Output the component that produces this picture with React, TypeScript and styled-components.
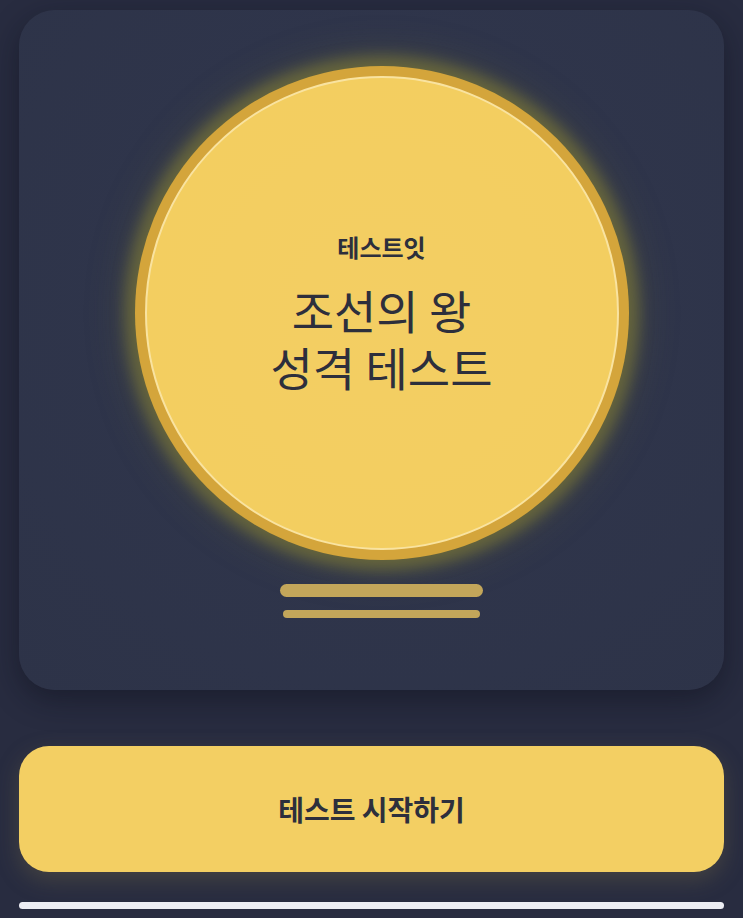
import React from 'react';
import styled, { createGlobalStyle } from 'styled-components';

const GlobalStyle = createGlobalStyle`
  html, body {
    margin: 0;
    padding: 0;
    background: #282c40;
  }
  body {
    font-family: 'Noto Sans CJK KR', 'Noto Sans', sans-serif;
  }
`;

const Page = styled.div`
  width: 743px;
  height: 918px;
  box-sizing: border-box;
  padding: 10px 19px 0;
  display: flex;
  flex-direction: column;
  background: #282c40;
  overflow: hidden;
`;

const Card = styled.div`
  height: 680px;
  border-radius: 36px;
  background: radial-gradient(circle at 52% 42%, #343a52 0%, #2f354b 45%, #2d3348 100%);
  box-shadow: 0 10px 30px rgba(12, 14, 24, 0.45);
  display: flex;
  flex-direction: column;
  align-items: center;
  padding: 56px 0 0 20px;
  box-sizing: border-box;
`;

const Coin = styled.div`
  width: 494px;
  height: 494px;
  border-radius: 50%;
  box-sizing: border-box;
  background: #d4a53b;
  padding: 10px;
  box-shadow: 0 0 14px 10px rgba(115, 112, 58, 0.75), 0 0 34px 16px rgba(100, 100, 60, 0.3);
`;

const CoinFace = styled.div`
  width: 100%;
  height: 100%;
  border-radius: 50%;
  box-sizing: border-box;
  border: 2px solid #f9e3a0;
  background: radial-gradient(circle at 50% 50%, #f3ce63 0%, #f3ce60 72%, #f6d453 100%);
  display: flex;
  flex-direction: column;
  align-items: center;
  justify-content: center;
  color: #2d2f3c;
`;

const Brand = styled.div`
  font-size: 24px;
  font-weight: 700;
  line-height: 28px;
  margin-bottom: 22px;
`;

const Title = styled.h1`
  margin: 0;
  display: flex;
  flex-direction: column;
  align-items: center;
  gap: 4px;
  font-size: 46px;
  font-weight: 400;
  text-align: center;
`;

const TitleLine = styled.span`
  display: block;
  height: 53px;
  line-height: 53px;
`;

const Bars = styled.div`
  margin-top: 24px;
  display: flex;
  flex-direction: column;
  align-items: center;
  gap: 13px;
`;

const Bar = styled.div<{ $w: number; $h: number }>`
  width: ${(p) => p.$w}px;
  height: ${(p) => p.$h}px;
  border-radius: ${(p) => p.$h}px;
  background: #c3a65a;
`;

const StartButton = styled.button`
  margin-top: 56px;
  height: 126px;
  border: none;
  border-radius: 30px;
  background: #f3cf63;
  color: #2d2f3c;
  font-family: 'Noto Sans CJK KR', 'Noto Sans', sans-serif;
  font-size: 28px;
  font-weight: 700;
  box-shadow: 0 8px 22px rgba(120, 110, 70, 0.35);
  cursor: pointer;
`;

const HomeIndicator = styled.div`
  margin-top: 30px;
  height: 7px;
  border-radius: 4px;
  background: #ecedf3;
`;

export default function App() {
  return (
    <>
      <GlobalStyle />
      <Page>
        <Card>
          <Coin>
            <CoinFace>
              <Brand>테스트잇</Brand>
              <Title>
                <TitleLine>조선의 왕</TitleLine>
                <TitleLine>성격 테스트</TitleLine>
              </Title>
            </CoinFace>
          </Coin>
          <Bars>
            <Bar $w={203} $h={13} />
            <Bar $w={197} $h={8} />
          </Bars>
        </Card>
        <StartButton>테스트 시작하기</StartButton>
        <HomeIndicator />
      </Page>
    </>
  );
}
